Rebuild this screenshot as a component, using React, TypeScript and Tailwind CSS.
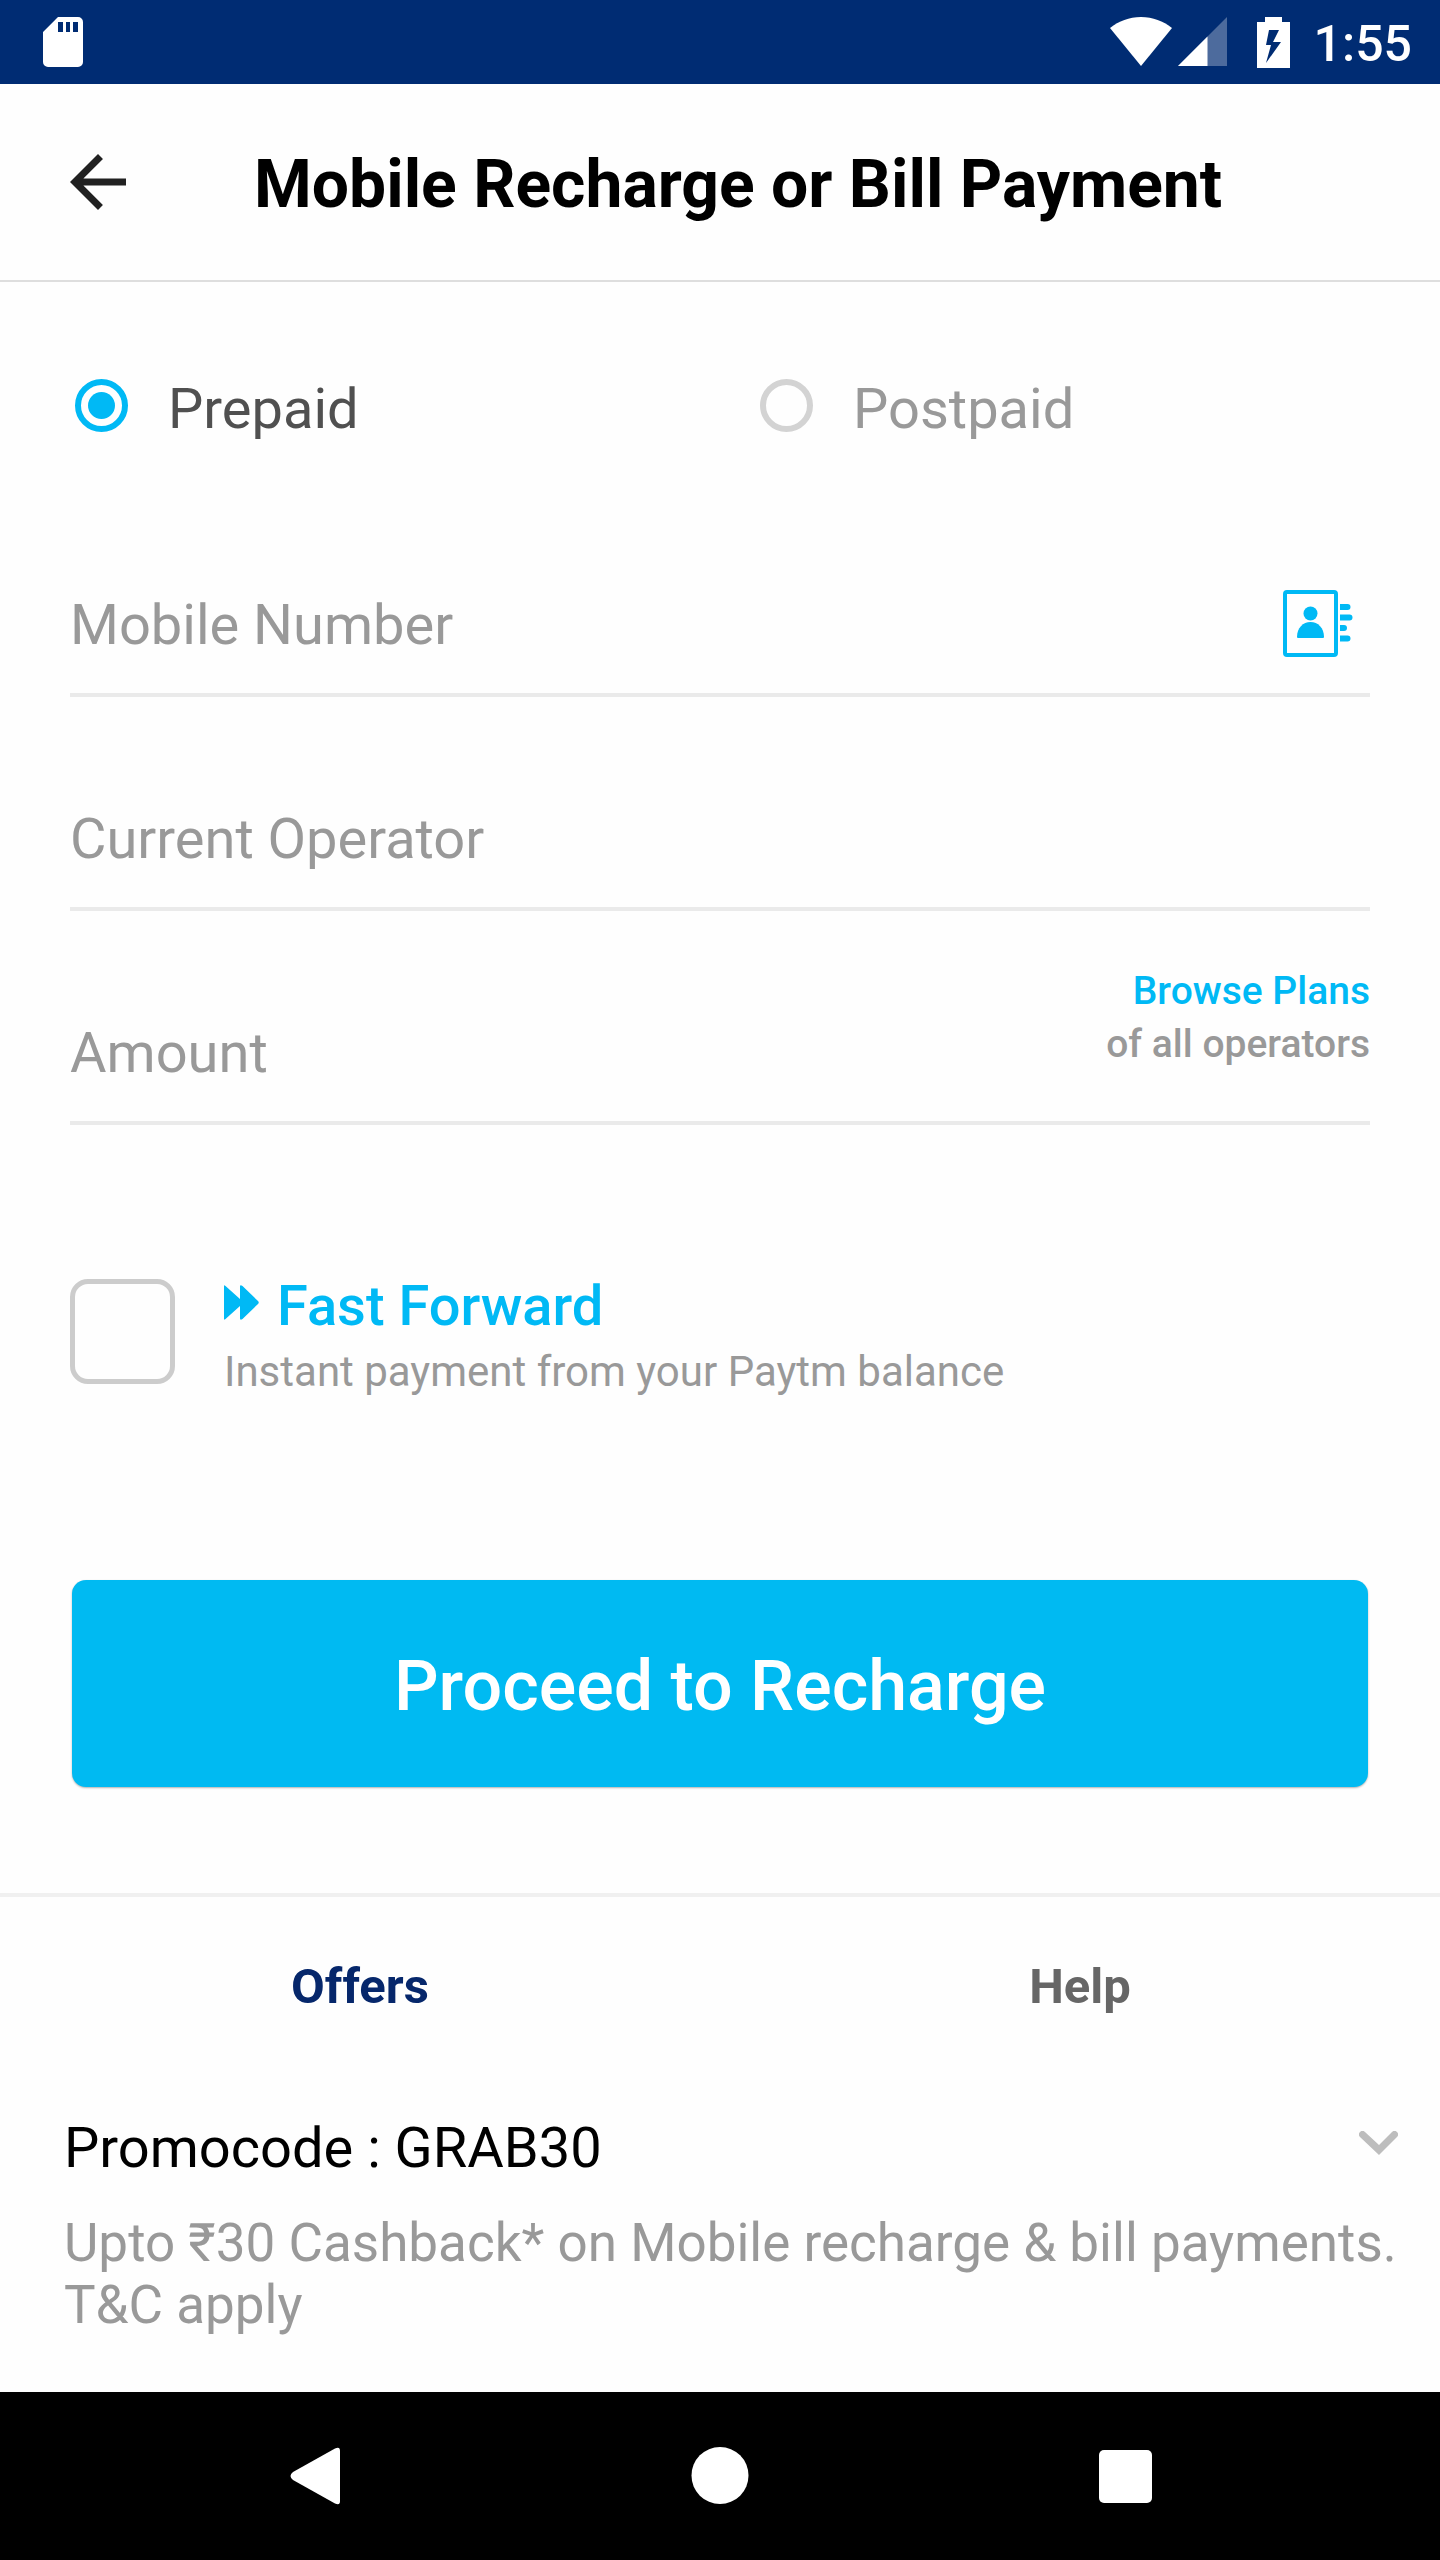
import { useState, type ReactNode } from 'react';

function StatusBar() {
  return (
    <div className="flex h-[84px] items-center bg-[#002c73] pr-[28px] pl-[43px] text-white">
      <svg className="h-[50px] w-[40px]" viewBox="0 0 40 50" fill="currentColor" aria-hidden="true">
        <path
          fillRule="evenodd"
          d="M15 0h20a5 5 0 0 1 5 5v40a5 5 0 0 1-5 5H5a5 5 0 0 1-5-5V15ZM15 5v10h5V5ZM23 5v10h4V5ZM30 5v10h5V5Z"
        />
      </svg>
      <div className="ml-auto flex items-center">
        <svg className="h-[50px] w-[62px]" viewBox="0 0 62 50" fill="currentColor" aria-hidden="true">
          <path d="M0 11C9 4 19 0 31 0s22 4 31 11L31 49Z" />
        </svg>
        <svg className="ml-[6px] h-[50px] w-[49px]" viewBox="0 0 49 50" fill="currentColor" aria-hidden="true">
          <path d="M49 0v49H0Z" opacity="0.3" />
          <path d="M29.500 19.500V49H0Z" />
        </svg>
        <svg className="ml-[30px] h-[51px] w-[33px]" viewBox="0 0 33 51" fill="currentColor" aria-hidden="true">
          <path fillRule="evenodd" d="M8 0h17v5h8v46H0V5h8ZM12 13 9 28h5L9 46 24 25h-8l6-12Z" />
        </svg>
        <span className="ml-[24px] pt-1 text-[50px] leading-[58px] font-medium">1:55</span>
      </div>
    </div>
  );
}

function Field({ label, type = 'text', children }: { label: string; type?: string; children?: ReactNode }) {
  return (
    <div className="flex h-[214px] items-end border-b-4 border-[#eaeaea]">
      <input
        type={type}
        aria-label={label}
        placeholder={label}
        className="mb-[35px] h-[66px] min-w-0 flex-1 bg-transparent text-[56px] leading-[66px] text-[#505050] outline-none placeholder:text-[#999999] placeholder:opacity-100"
      />
      {children}
    </div>
  );
}

function PlanRadio({ label, checked, onSelect }: { label: string; checked: boolean; onSelect: () => void }) {
  return (
    <label className="flex items-start gap-[40px]">
      <input
        type="radio"
        name="plan"
        checked={checked}
        onChange={onSelect}
        className="mt-[3px] grid h-[53px] w-[53px] shrink-0 appearance-none place-content-center rounded-full border-[6px] border-[#d3d3d3] before:h-[27px] before:w-[27px] before:rounded-full checked:border-[#00b9f5] checked:before:bg-[#00b9f5]"
      />
      <span className={checked ? 'text-[56px] leading-[66px] text-[#505050]' : 'text-[56px] leading-[66px] text-[#999999]'}>
        {label}
      </span>
    </label>
  );
}

export default function App() {
  const [plan, setPlan] = useState('Prepaid');

  return (
    <div className="flex min-h-screen flex-col bg-[#fefefe] font-['Roboto',sans-serif]">
      <StatusBar />

      <header className="flex h-[198px] items-center border-b-2 border-[#dedede] pl-[56px]">
        <button type="button" aria-label="Back" className="shrink-0 text-[#212121]">
          <svg className="h-[84px] w-[84px]" viewBox="0 0 24 24" fill="currentColor" aria-hidden="true">
            <path d="M20 11H7.830l5.590-5.590L12 4l-8 8 8 8 1.410-1.410L7.830 13H20v-2z" />
          </svg>
        </button>
        <h1 className="ml-[114px] pt-[6px] text-[66px] leading-[80px] font-bold text-black">
          Mobile Recharge or Bill Payment
        </h1>
      </header>

      <main className="flex-1">
        <form className="px-[70px] pt-[94px]" onSubmit={(e) => e.preventDefault()}>
          <div className="grid grid-cols-2 gap-[75px] pl-[5px]">
            <PlanRadio label="Prepaid" checked={plan === 'Prepaid'} onSelect={() => setPlan('Prepaid')} />
            <PlanRadio label="Postpaid" checked={plan === 'Postpaid'} onSelect={() => setPlan('Postpaid')} />
          </div>

          <div className="mt-[41px]">
            <Field label="Mobile Number" type="tel">
              <button type="button" aria-label="Choose from contacts" className="mr-[17px] mb-[35px] text-[#00b9f5]">
                <svg className="h-[68px] w-[70px]" viewBox="0 0 70 68" fill="currentColor" aria-hidden="true">
                  <rect x="2" y="2" width="51" height="63" rx="2" fill="none" stroke="currentColor" strokeWidth="4" />
                  <circle cx="27.500" cy="23.500" r="7" />
                  <path d="M14 47C14 38 20 32 27.500 32S41 38 41 47q0 1-1 1H15q-1 0-1-1Z" />
                  <path d="M57 14h7.500a3 3 0 0 1 0 6H57ZM57 24.500h9.500a3 3 0 0 1 0 6H57ZM57 35h4a3 3 0 0 1 0 6H57ZM57 45.500h7.500a3 3 0 0 1 0 6H57Z" />
                </svg>
              </button>
            </Field>
            <Field label="Current Operator" />
            <Field label="Amount">
              <a
                href="#plans"
                className="mb-[50px] text-right text-[39px] leading-[53px] font-medium text-[#999999]"
              >
                <span className="block text-[#00b9f5]">Browse Plans</span>
                <span className="block">of all operators</span>
              </a>
            </Field>
          </div>

          <label className="mt-[148px] flex items-start">
            <input
              type="checkbox"
              className="mt-[6px] h-[105px] w-[105px] shrink-0 appearance-none rounded-[18px] border-[5px] border-[#cccccc] checked:border-[#00b9f5] checked:bg-[#00b9f5]"
            />
            <span className="ml-[49px] flex flex-col gap-[8px]">
              <span className="flex items-start text-[56px] leading-[66px] font-medium text-[#00b9f5]">
                <svg className="mt-[12px] mr-[18px] h-[35px] w-[35px]" viewBox="0 0 35 35" fill="currentColor" aria-hidden="true">
                  <path d="M0 1.500Q0-.500 1.500 1L16 14V1.500Q16-.500 18.500 1L34 16q1.500 1.500 0 3L18.500 34Q16 35.500 16 33.500V21L1.500 34Q0 35.500 0 33.500Z" />
                </svg>
                Fast Forward
              </span>
              <span className="text-[42px] leading-[50px] text-[#999999]">Instant payment from your Paytm balance</span>
            </span>
          </label>

          <div className="mt-[183px] px-[2px]">
            <button
              type="submit"
              className="h-[207px] w-full rounded-[14px] bg-[#00baf2] pt-1 text-[70px] leading-[82px] font-medium text-white shadow-[0_1px_2px_rgba(0,0,0,0.3)]"
            >
              Proceed to Recharge
            </button>
          </div>
        </form>

        <section className="mt-[106px] border-t-4 border-[#f0f0f0]">
          <div role="tablist" className="grid grid-cols-2 pt-[61px] text-[49px] leading-[58px] font-bold">
            <button type="button" role="tab" aria-selected="true" className="text-[#06276b]">
              Offers
            </button>
            <button type="button" role="tab" aria-selected="false" className="text-[#666666]">
              Help
            </button>
          </div>

          <article className="mt-[99px] pr-[42px] pl-[64px]">
            <div className="flex items-start justify-between">
              <h2 className="text-[56px] leading-[66px] text-black">Promocode : GRAB30</h2>
              <button type="button" aria-label="Show offer details" className="mt-[16px] text-[#bdbdbd]">
                <svg className="h-[24px] w-[39px]" viewBox="0 0 39 24" fill="currentColor" aria-hidden="true">
                  <path d="M1 6A3.500 3.500 0 0 1 6 1L20 14 33 1a3.500 3.500 0 0 1 5 5L20 24Z" />
                </svg>
              </button>
            </div>
            <p className="mt-[31px] text-[53px] leading-[62px] text-[#999999]">
              Upto ₹30 Cashback* on Mobile recharge &amp; bill payments. T&amp;C apply
            </p>
          </article>
        </section>
      </main>

      <nav className="grid h-[168px] grid-cols-3 bg-black px-[112px] text-white" aria-label="System">
        <button type="button" aria-label="Back" className="flex items-center justify-center">
          <svg className="h-[58px] w-[50px]" viewBox="0 0 50 58" fill="currentColor" aria-hidden="true">
            <path d="M45 1.500Q50-1 50 4v50q0 5-5 2.500L3 33q-5-4 0-8Z" />
          </svg>
        </button>
        <button type="button" aria-label="Home" className="flex items-center justify-center">
          <svg className="h-[58px] w-[58px]" viewBox="0 0 58 58" fill="currentColor" aria-hidden="true">
            <circle cx="29" cy="28.500" r="28.500" />
          </svg>
        </button>
        <button type="button" aria-label="Recent apps" className="flex items-center justify-center">
          <svg className="h-[53px] w-[53px]" viewBox="0 0 53 53" fill="currentColor" aria-hidden="true">
            <rect width="53" height="53" rx="5" />
          </svg>
        </button>
      </nav>
    </div>
  );
}
